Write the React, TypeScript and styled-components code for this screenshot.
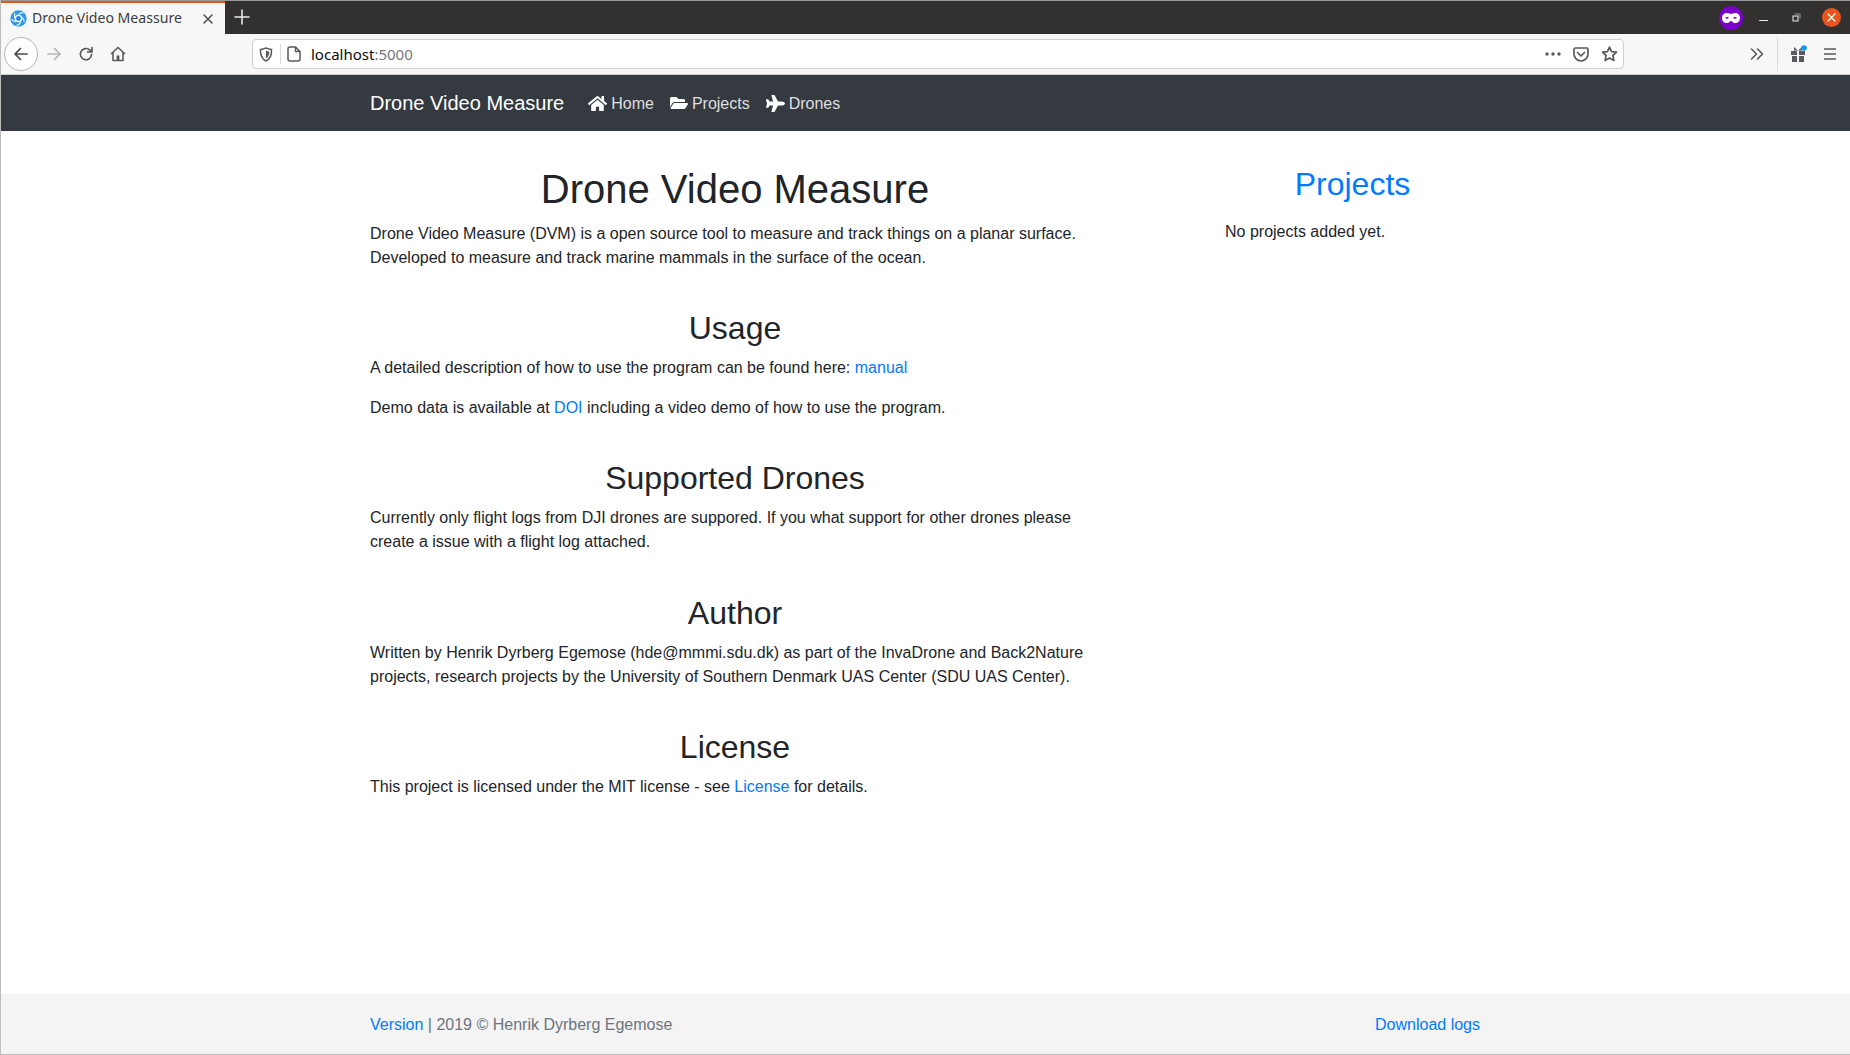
import React from "react";
import styled, { createGlobalStyle } from "styled-components";
import { FaHome, FaFolderOpen, FaPlane } from "react-icons/fa";

const Global = createGlobalStyle`
  html, body { margin: 0; padding: 0; height: 100%; }
  body { font-family: "Liberation Sans", Arial, sans-serif; font-size: 16px; line-height: 1.5; color: #212529; background: #fff; }
  * { box-sizing: border-box; }
`;

const Window = styled.div`
  position: relative; height: 1055px; display: flex; flex-direction: column; overflow: hidden; background: #fff;
  padding: 1px 0 1px;
  &::after {
    content: ""; position: absolute; inset: 0; pointer-events: none;
    border: 0 solid #bdbdbd; border-width: 1px 0 1px 1px; border-top-color: #9a9a9a;
  }
`;
const TabStrip = styled.div`
  height: 33px; flex: none; display: flex; align-items: stretch; background: #333030; color: #fff;
`;
const Tab = styled.div`
  width: 225px; display: flex; align-items: center; padding: 0 0 0 10px; background: #f7f7f7;
  border-top: 2px solid #e95420; color: #3d3d40;
  font-family: "Noto Sans", sans-serif; font-size: 14.1px; line-height: 1;
`;
const TabTitle = styled.span`
  margin-left: 5px; flex: 1; white-space: nowrap;
`;
const TabClose = styled.span`
  display: flex; width: 12px; margin-right: 11px;
`;
const NewTab = styled.span`
  display: flex; margin: 8px 0 0 9px; height: 16px;
`;
const StripSpacer = styled.div` flex: 1; `;
const WindowControls = styled.div`
  display: flex; align-items: center; height: 33px; padding-right: 9px;
`;
const Mask = styled.span`
  width: 24px; height: 24px; border-radius: 50%; background: #7c00cc; display: flex; align-items: center; justify-content: center; margin-right: 4px;
`;
const WinButton = styled.span`
  width: 33px; display: flex; justify-content: center; align-items: center;
`;
const CloseBall = styled.span`
  width: 19px; height: 19px; border-radius: 50%; background: #e95420; display: flex; align-items: center; justify-content: center; margin-left: 9px;
`;
const Toolbar = styled.div`
  height: 41px; flex: none; display: flex; align-items: center; background: #f7f7f7;
  border-bottom: 1px solid #cfcfcf; padding: 0 14px 0 4px;
`;
const BackButton = styled.span`
  width: 34px; height: 34px; border-radius: 50%; border: 1px solid #b5b5b5; background: #fff;
  display: flex; align-items: center; justify-content: center; flex: none;
`;
const ToolIcon = styled.span<{ $w: number }>`
  width: ${(p) => p.$w}px; display: flex; align-items: center; justify-content: center; flex: none;
`;
const UrlBar = styled.div`
  width: 1372px; height: 30px; margin-left: 119px; flex: none; background: #fff; border: 1px solid #d0d0d2; border-radius: 4px;
  display: flex; align-items: center; padding-left: 6px;
  font-family: "Noto Sans", sans-serif; font-size: 15px; color: #0c0c0d;
`;
const UrlDivider = styled.span`
  width: 1px; height: 20px; background: #d8d8d8; margin: 0 6px 0 7px;
`;
const UrlText = styled.span`
  margin-left: 10px; flex: 1;
`;
const UrlPort = styled.span` color: #77777c; `;
const ToolSpacer = styled.span` flex: 1; `;
const ToolDivider = styled.span`
  width: 1px; height: 34px; background: #dcdcdc; margin: 0 11px 0 13px;
`;
const MenuIcon = styled.span`
  display: flex; margin-left: 17px;
`;
const NavBar = styled.nav`
  height: 56px; flex: none; background: #343a40; display: flex; justify-content: center;
`;
const Container = styled.div`
  width: 1140px; padding: 0 15px; display: flex; align-items: center;
`;
const Brand = styled.a`
  font-size: 20px; line-height: 30px; color: #fff; margin-right: 16px; white-space: nowrap;
`;
const NavLink = styled.a`
  display: flex; align-items: center; padding: 9px 8px 7px; color: rgba(255,255,255,.85);
`;
const NavIcon = styled.span`
  display: flex; color: #fff; margin: -2px 4px 0 0;
`;
const Main = styled.main`
  flex: 1; display: flex; justify-content: center; padding-top: 34.6px;
`;
const Row = styled.div`
  width: 1140px; display: flex; align-items: flex-start;
`;
const MainColumn = styled.div`
  width: 760px; padding: 0 15px; flex: none;
`;
const SideColumn = styled.aside`
  width: 285px; margin-left: 95px; padding: 0 15px; flex: none;
`;
const Title = styled.h1`
  font-size: 40px; line-height: 46.8px; font-weight: 500; margin: 0 0 9.2px; text-align: center;
`;
const Heading = styled.h2`
  font-size: 32px; line-height: 37.8px; font-weight: 500; margin: 0 0 8.6px; text-align: center;
`;
const SideHeading = styled(Heading)`
  margin-bottom: 16.6px;
`;
const Link = styled.a`
  color: #007bff; text-decoration: none;
`;
const Text = styled.p`
  margin: 0 0 16px;
`;
const Section = styled.section<{ $top?: number }>`
  margin-top: ${(p) => p.$top ?? 40}px;
`;
const Footer = styled.footer`
  height: 60px; flex: none; background: #f4f4f4; display: flex; justify-content: center; color: #6c757d;
`;
const FooterInner = styled.div`
  width: 1140px; padding: 1px 15px 0; display: flex; align-items: center; justify-content: space-between; line-height: 59px;
`;

const Favicon = () => (
  <svg width="17" height="17" viewBox="0 0 17 17">
    <circle cx="8.5" cy="8.5" r="8.2" fill="#2f9be8" />
    <circle cx="8.5" cy="8.5" r="3.8" fill="#f7f7f7" />
    <circle cx="8.5" cy="8.5" r="2.4" fill="#1f86d8" />
    <path d="M8.5 4.7 C10 3 12 2.5 13.5 3 M12.1 7.3 C13.5 8.5 14.5 10 14.2 12 M10.4 11.8 C10 13.5 8.5 15 6.5 15.3 M6 11.5 C4 11.5 2.5 10.5 1.8 9 M4.8 8 C4 6.5 4 4.5 5 3" stroke="#f7f7f7" strokeWidth="1.1" fill="none" />
  </svg>
);
const Stroke = ({ c, w = 16, h = 16, sw = 2, d }: { c: string; w?: number; h?: number; sw?: number; d: string }) => (
  <svg width={w} height={h} viewBox={`0 0 ${w} ${h}`} fill="none" stroke={c} strokeWidth={sw} strokeLinecap="round" strokeLinejoin="round">
    <path d={d} />
  </svg>
);

export default function App() {
  return (
    <>
      <Global />
      <Window>
        <TabStrip>
          <Tab>
            <Favicon />
            <TabTitle>Drone Video Meassure</TabTitle>
            <TabClose><Stroke c="#4a4a4f" w={12} h={12} sw={1.5} d="M2 2 L10 10 M10 2 L2 10" /></TabClose>
          </Tab>
          <NewTab><Stroke c="#e8e8e8" sw={1.6} d="M8 1 V15 M1 8 H15" /></NewTab>
          <StripSpacer />
          <WindowControls>
            <Mask>
              <svg width="18" height="10" viewBox="0 0 18 10">
                <path fillRule="evenodd" fill="#fff" d="M5 0 C7 0 8 1 9 1 C10 1 11 0 13 0 C16 0 18 2 18 5 C18 8 16 10 13 10 C11 10 10 8 9 8 C8 8 7 10 5 10 C2 10 0 8 0 5 C0 2 2 0 5 0 Z M5 4 C4 4 3.4 4.4 3.2 5 C4 6 6 6 6.8 5 C6.6 4.4 6 4 5 4 Z M13 4 C12 4 11.4 4.4 11.2 5 C12 6 14 6 14.8 5 C14.6 4.4 14 4 13 4 Z" />
              </svg>
            </Mask>
            <WinButton><Stroke c="#f0f0f0" w={9} h={9} sw={1} d="M0.5 7.5 H8.5" /></WinButton>
            <WinButton>
              <svg width="9" height="9" viewBox="0 0 9 9" fill="none">
                <path d="M3 1 H8 V6" stroke="#9a9a9a" strokeWidth="1" />
                <rect x="1" y="3" width="5" height="5" stroke="#f0f0f0" strokeWidth="1" />
              </svg>
            </WinButton>
            <CloseBall><Stroke c="#fff" w={9} h={9} sw={1.2} d="M1 1 L8 8 M8 1 L1 8" /></CloseBall>
          </WindowControls>
        </TabStrip>
        <Toolbar>
          <BackButton><Stroke c="#4a4a4f" sw={1.7} d="M14 8 H2 M7.5 2.5 L2 8 L7.5 13.5" /></BackButton>
          <ToolIcon $w={32}><Stroke c="#b5b5b6" sw={1.7} d="M2 8 H14 M8.5 2.5 L14 8 L8.5 13.5" /></ToolIcon>
          <ToolIcon $w={32}>
            <Stroke c="#5a5a5e" sw={1.7} d="M13.6 8.5 A5.6 5.6 0 1 1 11.8 4 L14 6 M14 1.5 V6 H9.5" />
          </ToolIcon>
          <ToolIcon $w={31}>
            <svg width="16" height="16" viewBox="0 0 16 16" fill="none" stroke="#5a5a5e" strokeWidth="1.6" strokeLinejoin="round">
              <path d="M1 8 L8 1.5 L15 8 M3 6.5 V14.5 H13 V6.5" />
              <rect x="6.6" y="9.5" width="2.8" height="5" fill="#5a5a5e" stroke="none" />
            </svg>
          </ToolIcon>
          <UrlBar>
            <svg width="14" height="15" viewBox="0 0 14 15" fill="none">
              <path d="M1.5 2.5 C4 2.5 5 1.5 7 1 C9 1.5 10 2.5 12.5 2.5 C12.8 8 11 12 7 14 C3 12 1.2 8 1.5 2.5 Z" stroke="#5a5a5e" strokeWidth="1.5" />
              <path d="M7 3.5 C8 4 9 4.5 10.3 4.5 C10.3 8 9 10.5 7 11.5 Z" fill="#5a5a5e" />
            </svg>
            <UrlDivider />
            <svg width="14" height="16" viewBox="0 0 14 16" fill="none" stroke="#5a5a5e" strokeWidth="1.5" strokeLinejoin="round">
              <path d="M3 1 H8.5 L13 5.5 V13 A2 2 0 0 1 11 15 H3 A2 2 0 0 1 1 13 V3 A2 2 0 0 1 3 1 Z M8.5 1 V5.5 H13" />
            </svg>
            <UrlText>localhost<UrlPort>:5000</UrlPort></UrlText>
            <ToolIcon $w={28}>
              <svg width="16" height="4" viewBox="0 0 16 4" fill="#5a5a5e"><circle cx="2" cy="2" r="1.7" /><circle cx="8" cy="2" r="1.7" /><circle cx="14" cy="2" r="1.7" /></svg>
            </ToolIcon>
            <ToolIcon $w={28}>
              <svg width="16" height="15" viewBox="0 0 16 15" fill="none" stroke="#5a5a5e" strokeWidth="1.7" strokeLinejoin="round" strokeLinecap="round">
                <path d="M1 2.5 A1.5 1.5 0 0 1 2.5 1 H13.5 A1.5 1.5 0 0 1 15 2.5 V7 A7 7 0 0 1 1 7 Z M4.5 5.5 L8 9 L11.5 5.5" />
              </svg>
            </ToolIcon>
            <ToolIcon $w={28}>
              <svg width="17" height="16" viewBox="0 0 17 16" fill="none" stroke="#5a5a5e" strokeWidth="1.7" strokeLinejoin="round">
                <path d="M8.5 1.2 L10.6 5.6 L15.5 6.2 L11.9 9.5 L12.9 14.4 L8.5 12 L4.1 14.4 L5.1 9.5 L1.5 6.2 L6.4 5.6 Z" />
              </svg>
            </ToolIcon>
          </UrlBar>
          <ToolSpacer />
          <Stroke c="#5a5a5e" w={14} h={12} sw={1.6} d="M1.5 1 L6.5 6 L1.5 11 M7.5 1 L12.5 6 L7.5 11" />
          <ToolDivider />
          <ToolIcon $w={18}>
            <svg width="18" height="18" viewBox="0 0 18 18">
              <g fill="#5a5a5e">
                <rect x="2" y="6" width="6" height="4" />
                <rect x="10" y="6" width="6" height="4" />
                <rect x="3" y="11" width="5" height="6" />
                <rect x="10" y="11" width="5" height="6" />
                <path d="M5 2 L9 5.5 L13 2 V5.5 H5 Z" />
              </g>
              <circle cx="15" cy="3" r="2.8" fill="#0a9dff" />
            </svg>
          </ToolIcon>
          <MenuIcon>
            <Stroke c="#5a5a5e" w={12} h={12} sw={1.6} d="M0 1 H12 M0 6 H12 M0 11 H12" />
          </MenuIcon>
        </Toolbar>
        <NavBar>
          <Container>
            <Brand>Drone Video Measure</Brand>
            <NavLink><NavIcon><FaHome size={19} /></NavIcon>Home</NavLink>
            <NavLink><NavIcon><FaFolderOpen size={18} /></NavIcon>Projects</NavLink>
            <NavLink><NavIcon><FaPlane size={19} /></NavIcon>Drones</NavLink>
          </Container>
        </NavBar>
        <Main>
          <Row>
            <MainColumn>
              <Section $top={0}>
                <Title>Drone Video Measure</Title>
                <Text>Drone Video Measure (DVM) is a open source tool to measure and track things on a planar surface. Developed to measure and track marine mammals in the surface of the ocean.</Text>
              </Section>
              <Section>
                <Heading>Usage</Heading>
                <Text>A detailed description of how to use the program can be found here: <Link>manual</Link></Text>
                <Text>Demo data is available at <Link>DOI</Link> including a video demo of how to use the program.</Text>
              </Section>
              <Section>
                <Heading>Supported Drones</Heading>
                <Text>Currently only flight logs from DJI drones are suppored. If you what support for other drones please create a issue with a flight log attached.</Text>
              </Section>
              <Section $top={40.2}>
                <Heading>Author</Heading>
                <Text>Written by Henrik Dyrberg Egemose (hde@mmmi.sdu.dk) as part of the InvaDrone and Back2Nature projects, research projects by the University of Southern Denmark UAS Center (SDU UAS Center).</Text>
              </Section>
              <Section $top={39.8}>
                <Heading>License</Heading>
                <Text>This project is licensed under the MIT license - see <Link>License</Link> for details.</Text>
              </Section>
            </MainColumn>
            <SideColumn>
              <SideHeading><Link>Projects</Link></SideHeading>
              <Text>No projects added yet.</Text>
            </SideColumn>
          </Row>
        </Main>
        <Footer>
          <FooterInner>
            <span><Link>Version</Link> | 2019 © Henrik Dyrberg Egemose</span>
            <Link>Download logs</Link>
          </FooterInner>
        </Footer>
      </Window>
    </>
  );
}
